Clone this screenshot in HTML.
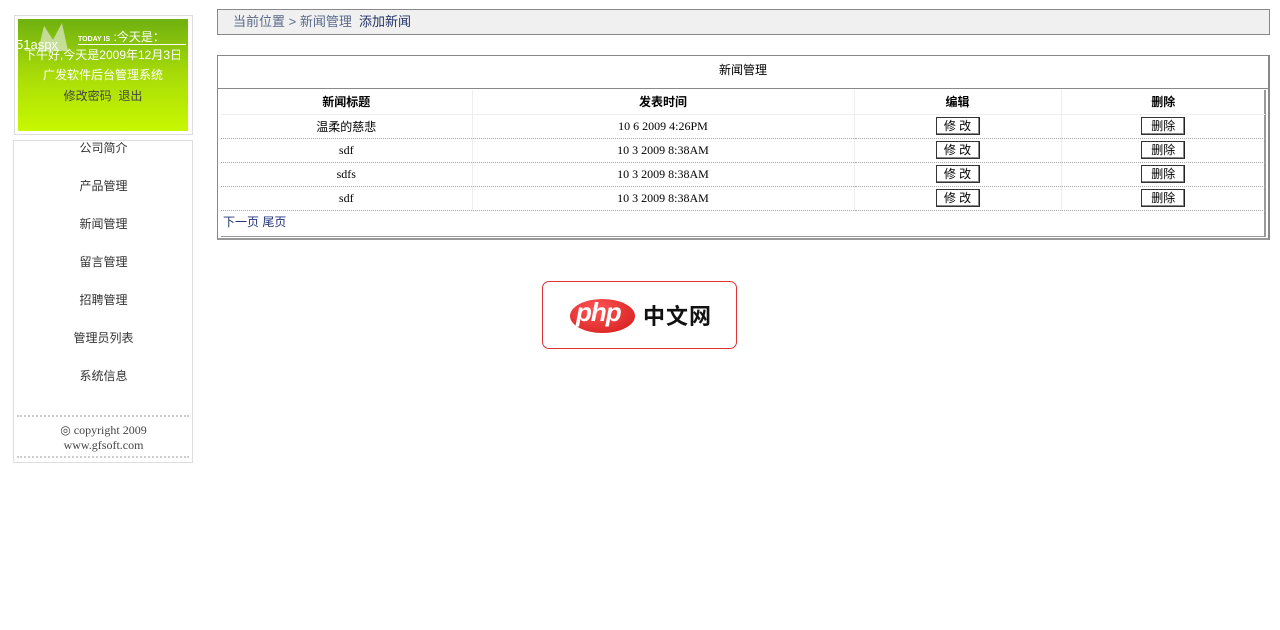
<!DOCTYPE html>
<html><head><meta charset="utf-8"><style>
*{margin:0;padding:0;box-sizing:border-box}
body{width:1280px;height:630px;background:#fff;position:relative;font-family:"Liberation Serif","Noto Sans CJK SC",serif;font-size:12px;color:#000;overflow:hidden}
.a{position:absolute}
.cn{font-family:"Liberation Sans","Noto Sans CJK SC",sans-serif}
.menu div{position:absolute;left:0;width:179px;text-align:center;font-size:12px;color:#333;font-family:"Liberation Sans","Noto Sans CJK SC",sans-serif}
table{border-collapse:collapse;width:1044px;font-size:12px}
td,th{height:24px;text-align:center;border-left:1px solid #eee;border-bottom:1px dotted #aaa;padding:0}
th{font-weight:bold;border-bottom:1px solid #eee;height:24px;font-family:"Liberation Sans","Noto Sans CJK SC",sans-serif}
.btn{display:inline-block;width:44px;height:18px;border:1px solid #333;border-right-color:#222;background:#fff;font-size:12px;line-height:16px;font-family:"Liberation Sans","Noto Sans CJK SC",sans-serif;box-shadow:inset -1px -1px #888}
</style></head><body>
<div class="a" style="left:14px;top:15px;width:179px;height:120px;border:1px solid #ddd"></div>
<div class="a cn" style="left:18px;top:19px;width:170px;height:112px;background:linear-gradient(#6fb010,#a8dc08 50%,#c8f800);color:#fff;text-align:center">
<div class="a" style="left:20px;top:4px;width:30px;height:28px;background:#e0e8d0;opacity:.7;clip-path:polygon(0 100%,20% 10%,50% 60%,80% 0,100% 100%)"></div>
<div class="a" style="left:-2px;top:18px;font-size:13px;color:#fff;font-family:'Liberation Sans',sans-serif">51aspx</div>
<div class="a" style="left:60px;top:9px;font-size:12px"><span style="font-size:7px;font-weight:bold">TODAY IS</span> :今天是：</div>
<div class="a" style="left:60px;top:25px;width:108px;height:1px;background:#fff"></div>
<div class="a" style="left:0;top:27px;width:170px;font-size:12px">下午好,今天是2009年12月3日</div>
<div class="a" style="left:0;top:47px;width:170px;font-size:12px">广发软件后台管理系统</div>
<div class="a" style="left:0;top:68px;width:170px;font-size:12px;color:#444">修改密码 &nbsp;退出</div>
</div>
<div class="a menu" style="left:13px;top:140px;width:180px;height:323px;border:1px solid #ddd">
<div style="top:-2px">公司简介</div>
<div style="top:36px">产品管理</div>
<div style="top:74px">新闻管理</div>
<div style="top:112px">留言管理</div>
<div style="top:150px">招聘管理</div>
<div style="top:188px">管理员列表</div>
<div style="top:226px">系统信息</div>
<div style="top:274px;left:3px;width:172px;height:2px;border-top:2px dotted #ccc"></div>
<div style="top:282px;font-family:'Liberation Serif',serif;color:#444">◎ copyright 2009</div>
<div style="top:297px;font-family:'Liberation Serif',serif;color:#444">www.gfsoft.com</div>
<div style="top:315px;left:3px;width:172px;height:2px;border-top:2px dotted #ccc"></div>
</div>
<div class="a cn" style="left:217px;top:9px;width:1053px;height:26px;border:1px solid #888;background:#f0f0f0;padding-left:15px;line-height:23px;font-size:13px;color:#5a6a8a">当前位置 &gt; 新闻管理 &nbsp;<span style="color:#223366">添加新闻</span></div>
<div class="a" style="left:217px;top:55px;width:1053px;height:185px;border:1px solid #888;border-right:2px solid #888;border-bottom:2px solid #999">
<div class="cn" style="height:33px;line-height:29px;text-align:center;font-size:12px;border-bottom:1px solid #888">新闻管理</div>
<div class="a" style="left:3px;top:34px;width:1045px;height:147px;border-right:2px solid #999;border-bottom:1px solid #999">
<table>
<tr><th style="width:251px;border-left:0">新闻标题</th><th style="width:382px">发表时间</th><th style="width:207px">编辑</th><th>删除</th></tr>
<tr><td class="cn" style="border-left:0">温柔的慈悲</td><td>10 6 2009 4:26PM</td><td><span class="btn">修 改</span></td><td><span class="btn">删除</span></td></tr>
<tr><td style="border-left:0">sdf</td><td>10 3 2009 8:38AM</td><td><span class="btn">修 改</span></td><td><span class="btn">删除</span></td></tr>
<tr><td style="border-left:0">sdfs</td><td>10 3 2009 8:38AM</td><td><span class="btn">修 改</span></td><td><span class="btn">删除</span></td></tr>
<tr><td style="border-left:0">sdf</td><td>10 3 2009 8:38AM</td><td><span class="btn">修 改</span></td><td><span class="btn">删除</span></td></tr>
</table>
<div class="cn" style="padding-left:2px;line-height:22px;color:#223377;font-size:12px">下一页 尾页</div>
</div>
</div>
<div class="a" style="left:542px;top:281px;width:195px;height:68px;border:1px solid #d33;border-radius:7px;background:#fff">
<div class="a" style="left:27px;top:17px;width:65px;height:34px;border-radius:50%;background:radial-gradient(ellipse at 40% 30%,#f55,#d01818)"></div>
<div class="a" style="left:33px;top:15px;font-family:'Liberation Sans',sans-serif;font-weight:bold;font-style:italic;font-size:26px;color:#fff;letter-spacing:-1px">php</div>
<div class="a cn" style="left:100px;top:17px;font-size:22px;color:#111;letter-spacing:1px;font-weight:bold">中文网</div>
</div>
</body></html>
